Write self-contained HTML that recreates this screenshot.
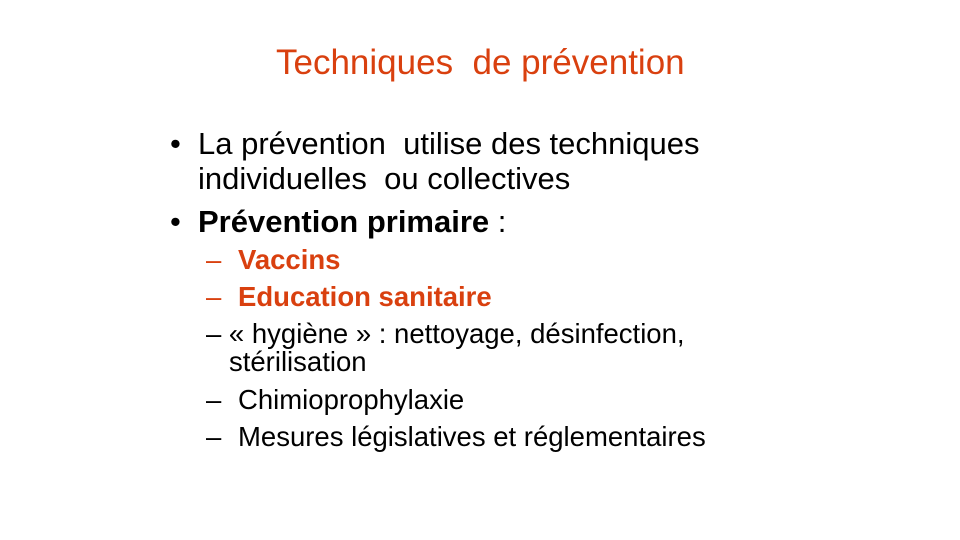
<!DOCTYPE html>
<html><head><meta charset="utf-8"><style>
body{margin:0;width:960px;height:540px;background:#fff;position:relative;overflow:hidden;font-family:"Liberation Sans",sans-serif;color:#000}
div{position:absolute;line-height:1;white-space:nowrap}
.t{font-size:35px;color:#d9400f;left:276px;top:45px}
.m{font-size:31px}
.s{font-size:27.5px}
.r{color:#d9400f;font-weight:bold}
</style></head><body>
<div class="t">Techniques&nbsp; de prévention</div>
<div class="m" style="left:170px;top:128px">•</div>
<div class="m" style="left:198px;top:128px">La prévention&nbsp; utilise des techniques</div>
<div class="m" style="left:198px;top:163px">individuelles&nbsp; ou collectives</div>
<div class="m" style="left:170px;top:206px">•</div>
<div class="m" style="left:198px;top:206px"><b>Prévention primaire</b>&nbsp;:</div>
<div class="s r" style="left:206px;top:246px;font-weight:normal">–</div>
<div class="s r" style="left:238px;top:246px">Vaccins</div>
<div class="s r" style="left:206px;top:283px;font-weight:normal">–</div>
<div class="s r" style="left:238px;top:283px">Education sanitaire</div>
<div class="s" style="left:206px;top:320px">– « hygiène » : nettoyage, désinfection,</div>
<div class="s" style="left:229px;top:348px">stérilisation</div>
<div class="s" style="left:206px;top:386px">–</div>
<div class="s" style="left:238px;top:386px">Chimioprophylaxie</div>
<div class="s" style="left:206px;top:423px">–</div>
<div class="s" style="left:238px;top:423px">Mesures législatives et réglementaires</div>
</body></html>
